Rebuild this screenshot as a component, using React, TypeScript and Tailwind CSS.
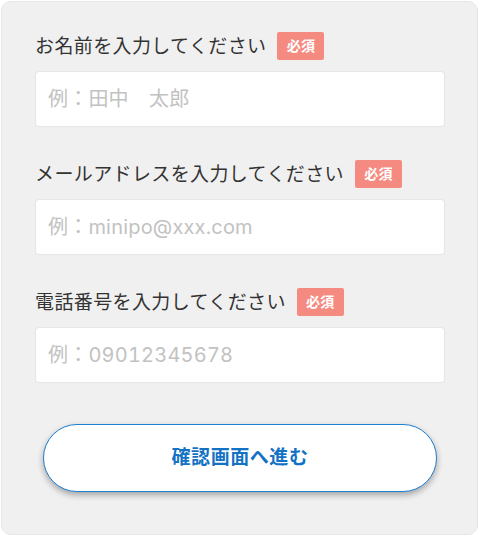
import React from "react";

const fields = [
  { label: "お名前を入力してください", placeholder: "例：田中　太郎", type: "text" },
  { label: "メールアドレスを入力してください", placeholder: "例：minipo@xxx.com", type: "email" },
  { label: "電話番号を入力してください", placeholder: "例：09012345678", type: "tel" },
];

export default function App() {
  return (
    <div className="w-[480px] h-[537px] bg-white pt-[1px] pl-[1px] font-['Inter','Noto_Sans_CJK_JP',sans-serif]">
      <div className="w-[477px] h-[534px] rounded-[10px] border border-[#e6e6e6] bg-[#f0f0f0] pt-[30px] pl-[33px] pr-[32px]">
        <form className="flex flex-col" onSubmit={(e) => e.preventDefault()}>
          {fields.map((f, i) => (
            <div key={i} className={i > 0 ? "mt-[33px]" : ""}>
              <div className="flex items-center h-[28px] gap-[11px]">
                <span className="text-[19px] tracking-[0.02em] text-[#333333] leading-none">{f.label}</span>
                <span className="flex items-center justify-center w-[47px] h-[28px] rounded-[2px] bg-[#f58a80] text-white text-[14px] font-bold tracking-[0.02em] leading-none">
                  必須
                </span>
              </div>
              <input
                type={f.type}
                placeholder={f.placeholder}
                className="mt-[11px] block w-[410px] h-[56px] rounded-[4px] border border-[#e6e6e6] bg-white px-[12px] text-[20px] tracking-[0.01em] tabular-nums text-[#333333] placeholder:text-[#c2c2c2] outline-none"
              />
            </div>
          ))}
          <button
            type="submit"
            className="mt-[41px] ml-[8px] w-[394px] h-[68px] rounded-full border-[1.5px] border-[#1f7fcf] bg-white shadow-[0_3px_6px_rgba(0,0,0,0.32)] text-[19px] font-bold tracking-[0.03em] text-[#1372c4]"
          >
            確認画面へ進む
          </button>
        </form>
      </div>
    </div>
  );
}
